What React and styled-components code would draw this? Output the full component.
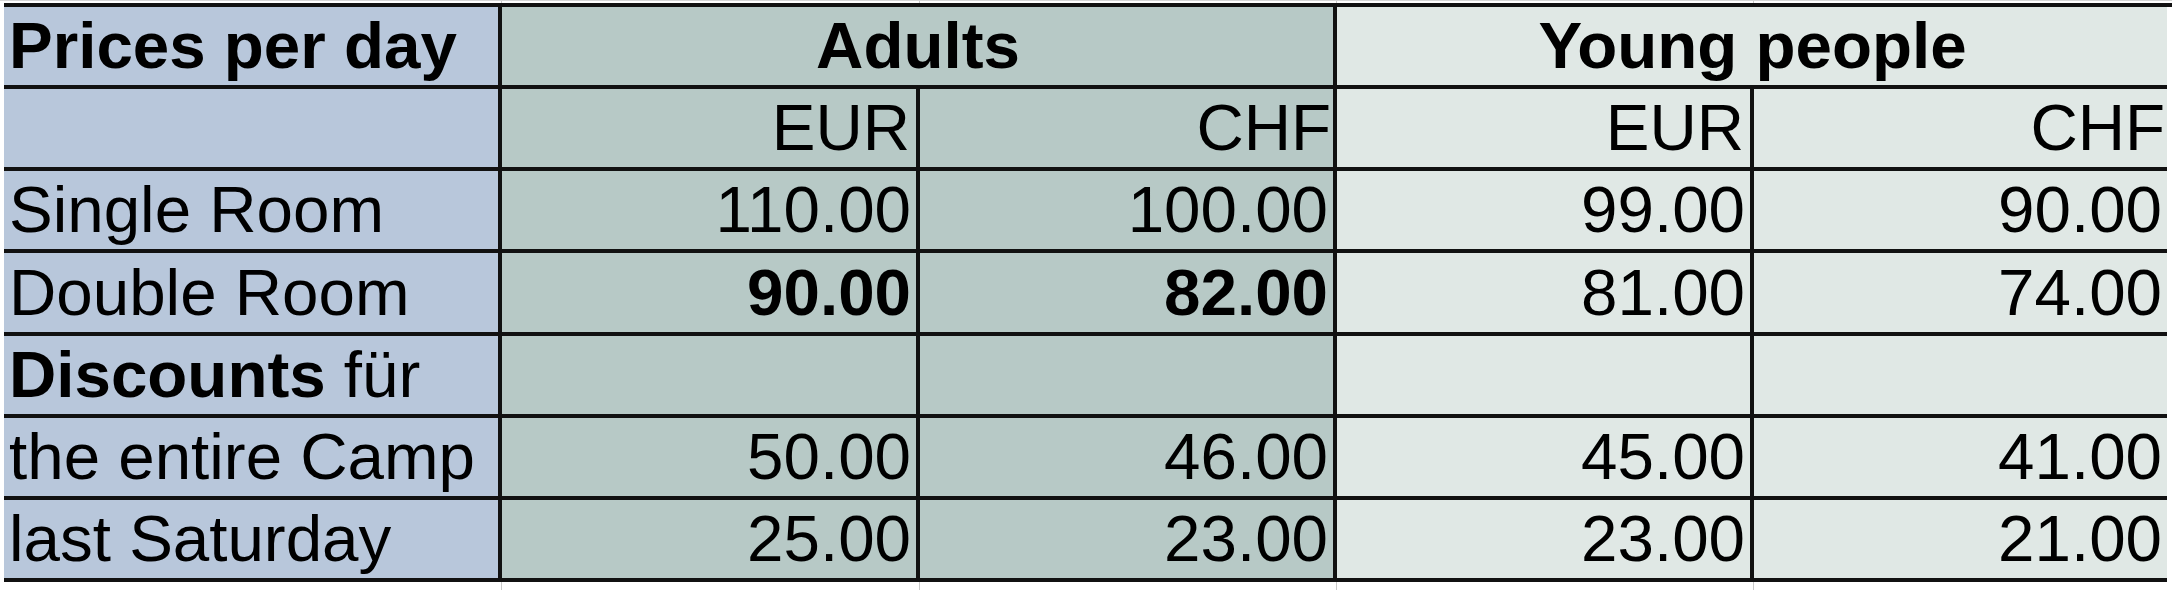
import React from 'react';
import styled, { createGlobalStyle } from 'styled-components';

const Global = createGlobalStyle`
  html, body { margin: 0; padding: 0; background: #ffffff; }
  body { font-family: "Liberation Sans", Arial, sans-serif; }
`;

const COLS = '498px 418px 417px 417px 413px';

const TONES = {
  label: '#b8c7db',
  adult: '#b7c9c6',
  young: '#e0e8e5',
};

const Sheet = styled.div`
  width: 2172px;
  height: 590px;
  overflow: hidden;
  box-sizing: border-box;
  padding-left: 4px;
  border-top: 1px solid #d6d6d6;
`;

const Gridlines = styled.div`
  display: grid;
  grid-template-columns: ${COLS};
  height: ${(p) => p.$h}px;
`;

const GridGap = styled.div`
  border-right: ${(p) => (p.$last ? 'none' : '1px solid #c9c9c9')};
`;

const Table = styled.div`
  display: grid;
  grid-template-columns: ${COLS};
  grid-template-rows: 82px 82px 82px 83px 82px 82px 82px;
  border-top: 4px solid #111;
`;

const Cell = styled.div`
  box-sizing: border-box;
  grid-column: span ${(p) => p.$span || 1};
  background: ${(p) => TONES[p.$tone]};
  border-bottom: 4px solid #111;
  border-right: ${(p) => (p.$last ? 'none' : '4px solid #111')};
  display: flex;
  align-items: center;
  justify-content: ${(p) =>
    p.$align === 'right' ? 'flex-end' : p.$align === 'center' ? 'center' : 'flex-start'};
  padding: 0 ${(p) => p.$pr ?? 4}px 0 5px;
  font-size: 65.5px;
  line-height: 78px;
  font-weight: ${(p) => (p.$bold ? 700 : 400)};
  color: #000;
  white-space: nowrap;
  overflow: hidden;
`;

const Text = styled.span`
  white-space: pre;
`;

const Strong = styled.b`
  font-weight: 700;
`;

const tones = ['label', 'adult', 'adult', 'young', 'young'];

const rows = [
  { label: 'Single Room', values: ['110.00', '100.00', '99.00', '90.00'] },
  { label: 'Double Room', values: ['90.00', '82.00', '81.00', '74.00'], bold: [true, true, false, false] },
  { label: <><Strong>Discounts</Strong>{' für'}</>, values: ['', '', '', ''] },
  { label: 'the entire Camp', values: ['50.00', '46.00', '45.00', '41.00'] },
  { label: 'last Saturday', values: ['25.00', '23.00', '23.00', '21.00'] },
];

const currencies = ['EUR', 'CHF', 'EUR', 'CHF'];

function Lines({ h }) {
  return (
    <Gridlines $h={h}>
      {tones.map((_, i) => (
        <GridGap key={i} $last={i === tones.length - 1} />
      ))}
    </Gridlines>
  );
}

export default function App() {
  return (
    <>
      <Global />
      <Sheet>
        <Lines h={2} />
        <Table>
          <Cell $tone="label" $bold><Text>Prices per day</Text></Cell>
          <Cell $tone="adult" $span={2} $align="center" $bold><Text>Adults</Text></Cell>
          <Cell $tone="young" $span={2} $align="center" $bold $last><Text>Young people</Text></Cell>

          <Cell $tone="label" />
          {currencies.map((c, i) => (
            <Cell key={i} $tone={tones[i + 1]} $align="right" $pr={i === 0 || i === 2 ? 6 : 2} $last={i === 3}>
              <Text>{c}</Text>
            </Cell>
          ))}

          {rows.map((r, ri) => (
            <React.Fragment key={ri}>
              <Cell $tone="label"><Text>{r.label}</Text></Cell>
              {r.values.map((v, i) => (
                <Cell
                  key={i}
                  $tone={tones[i + 1]}
                  $align="right"
                  $pr={5}
                  $bold={r.bold ? r.bold[i] : false}
                  $last={i === 3}
                >
                  <Text>{v}</Text>
                </Cell>
              ))}
            </React.Fragment>
          ))}
        </Table>
        <Lines h={12} />
      </Sheet>
    </>
  );
}
